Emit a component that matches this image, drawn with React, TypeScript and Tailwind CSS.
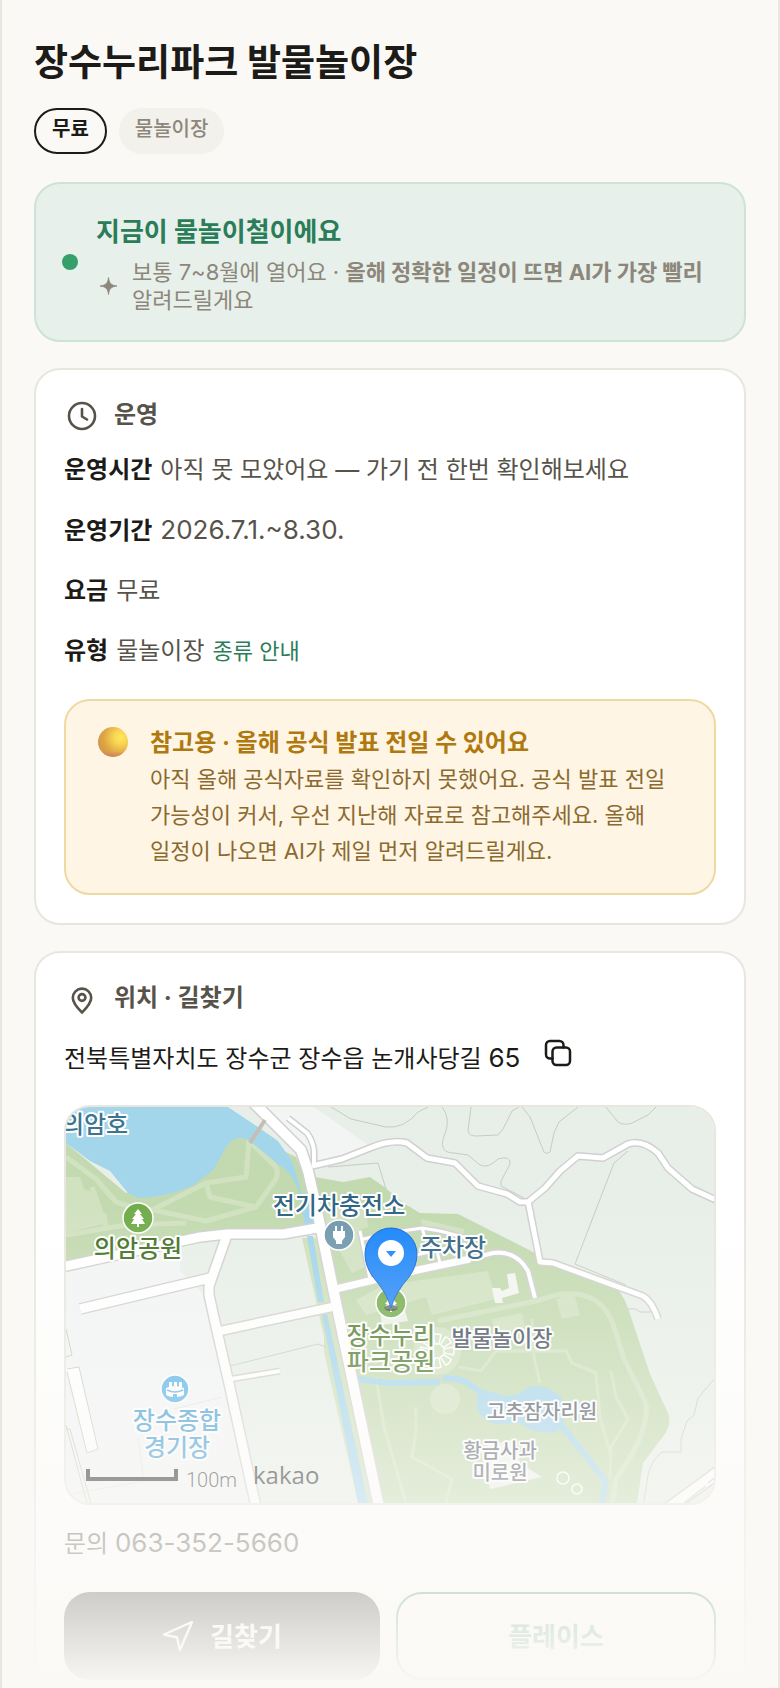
import type { ReactNode } from "react";

const infoRows = [
  { label: "운영시간", value: "아직 못 모았어요 — 가기 전 한번 확인해보세요" },
  { label: "운영기간", value: "2026.7.1.~8.30.", numeric: true },
  { label: "요금", value: "무료" },
  { label: "유형", value: "물놀이장", link: "종류 안내" },
];

function ClockIcon() {
  return (
    <svg viewBox="0 0 36 36" className="size-9" fill="none" stroke="currentColor" strokeWidth="2.6" strokeLinecap="round" strokeLinejoin="round">
      <circle cx="18" cy="18" r="13" />
      <path d="M18 11v7.5l5 3" />
    </svg>
  );
}

function PinIcon() {
  return (
    <svg viewBox="0 0 36 36" className="size-9" fill="none" stroke="currentColor" strokeWidth="2.6" strokeLinejoin="round">
      <path d="M18 31.5C14 27.500 8.800 22.500 8.800 16.800a9.200 9.200 0 0 1 18.400 0C27.200 22.500 22 27.500 18 31.500z" />
      <circle cx="18" cy="16.500" r="3.400" />
    </svg>
  );
}

function CopyIcon() {
  return (
    <svg viewBox="0 0 28 28" className="size-7" fill="none" stroke="currentColor" strokeWidth="2.5" strokeLinejoin="round" strokeLinecap="round">
      <rect x="8.5" y="8.5" width="17.5" height="17.5" rx="4" />
      <path d="M8.500 19.500H6a4 4 0 0 1-4-4V6a4 4 0 0 1 4-4h9.500a4 4 0 0 1 4 4v2.500" />
    </svg>
  );
}

function RouteIcon() {
  return (
    <svg viewBox="0 0 32 32" className="size-8" fill="none" stroke="currentColor" strokeWidth="2.400" strokeLinejoin="round">
      <path d="M30 2 2 14.500l13 3L18 30z" />
    </svg>
  );
}

function SparkIcon() {
  return (
    <svg viewBox="0 0 24 24" className="size-6" fill="currentColor">
      <path d="M12.500 3.500c.7 5.800 2.700 7.800 8.500 8.500-5.800.7-7.800 2.700-8.500 8.500C11.800 14.700 9.800 12.700 4 12c5.800-.7 7.800-2.700 8.500-8.500z" stroke="currentColor" strokeWidth="0.8" />
    </svg>
  );
}

function MoonIcon() {
  return (
    <svg viewBox="0 0 30 30" className="size-[30px]">
      <defs>
        <radialGradient id="moon" cx="0.75" cy="0.35" r="0.75">
          <stop offset="0" stopColor="#ffe860" />
          <stop offset="0.3" stopColor="#f8d552" />
          <stop offset="0.75" stopColor="#dda544" />
          <stop offset="1" stopColor="#d3994c" />
        </radialGradient>
        <linearGradient id="moonShade" x1="0" y1="0" x2="0" y2="1">
          <stop offset="0.82" stopColor="#d0706a" stopOpacity="0" />
          <stop offset="1" stopColor="#d0706a" stopOpacity="0.7" />
        </linearGradient>
      </defs>
      <circle cx="15" cy="15" r="15" fill="url(#moon)" />
      <circle cx="15" cy="15" r="15" fill="url(#moonShade)" />
    </svg>
  );
}

type MapLabelProps = { x: number; y: number; fill: string; size?: number; leading?: number; lines: string[] };

function MapLabel({ x, y, fill, size = 24, leading = 26, lines }: MapLabelProps) {
  return (
    <text y={y} fill={fill} fontSize={size} fontWeight="500" textAnchor="middle" stroke="#ffffff" strokeWidth="4" strokeLinejoin="round" paintOrder="stroke">
      {lines.map((line, i) => (
        <tspan key={line} x={x} dy={i ? leading : 0}>
          {line}
        </tspan>
      ))}
    </text>
  );
}

const roads = [
  { d: "M165 272 214 264", w: 4 },
  { d: "M294 124 304 172M297 132 330 125 356 121 374 124 401 131M356 121 360 134M370 140 374 156M345 149 400 137", w: 3 },
  { d: "M462 94 474 155 487 156 577 189Q586 194 592 212", w: 5 },
  { d: "M222 11 241 26Q247 34 248 44V59", w: 4 },
  { d: "M246 59 276 52 304 41Q325 32 341 36L361 51 389 56 412 79 441 87 454 95H462L479 81 494 64 512 49 537 51 562 37Q576 32 592 46L602 61 626 82 650 93", w: 5 },
  { d: "M400 153 427 146Q450 143 462 164L469 191", w: 4 },
  { d: "M270 182 312 172 347 164 404 152", w: 7 },
  { d: "M154 224 266 200", w: 8 },
  { d: "M144 171 14 202", w: 9 },
  { d: "M161 128 143 179V188L151 224 164 281 190 400", w: 9 },
  { d: "M-4 160 37 151 134 130 161 127H217L251 121", w: 9 },
  { d: "M182-10 235 43 242 64 252 108 268 186 313 400", w: 10 },
];

const contours = [
  "M265 0 285 12 320 20Q338 22 352 5L362 0",
  "M376 0Q384 10 380 24 370 46 388 46L402 48 414 58Q422 62 432 52 445 48 444 57L435 74V79L458 91",
  "M405 0 402 24Q403 29 410 29L432 28 437 22 446 4 453 0",
  "M456 0 464 10 478 45Q481 48 484 45L488 26 493 15 512 0",
  "M540 0 552 15Q558 19 566 16L582 8 590 0",
  "M562 44 548 56 509 157 560 178",
  "M562 202H570L574 205H585",
  "M650 270 632 291 628 308 621 314 615 332V345H596Q585 354 582 368L577 400",
  "M262 60 312 56 320 82",
  "M164 259 252 237 260 240",
];

// angles of the fountain's petals
const petals = [0, 45, 90, 135, 180, 225, 270, 315];

function KakaoMap() {
  return (
    <svg
      viewBox="0 0 648 396"
      preserveAspectRatio="xMidYMid slice"
      role="img"
      aria-label="장수누리파크 발물놀이장 지도"
      className="block h-[396px] w-full font-['Noto_Sans_CJK_KR',sans-serif]"
    >
      <rect width="648" height="396" fill="#e8efe9" />
      <path d="M0 163 115 138 114 164 134 184 143 192 190 396H0z" fill="#f2f5f5" />
      <path d="M200 0 248 0 302 38 250 60z" fill="#f2f5f4" />

      {/* parks */}
      <path d="M0 36 60 86 140 60 160 30 190 30 230 50 262 122 160 126 120 132 0 156z" fill="#c3dab0" />
      <path d="M249 70 277 75 304 70 317 79 339 97 354 106 392 107 469 146 486 156 552 182 558 192 562 201 584 267 602 306Q606 318 598 328L577 356 571 396H312L262 170z" fill="#c3dab0" />
      <path d="M236 131 250 131 312 396H292L258 245 258 230z" fill="#cfe0ba" />

      {/* footpaths inside the parks */}
      <path d="M0 70 14 70 18 82 28 86 32 104 40 106 42 116 0 126zM290 193 318 178 422 164 430 192 366 208 360 190 300 208zM490 192 508 186 514 208 496 212zM426 212 456 206 460 226 430 232z" fill="#d1e2c1" />
      <path d="M252 106 300 96 302 120 296 122 300 160 286 166zM355 112 398 122 398 130 356 120z" fill="#d1e2c1" />
      <g fill="none" stroke="#d1e2c1" strokeWidth="5" strokeLinejoin="round">
        <path d="M0 50 30 72 50 95 82 105 140 76 180 70 183 34 206 56Q214 62 210 72L190 100 140 114 82 102M140 76 144 90 190 100M0 128 60 118 120 116M26 80 40 120" />
        <path d="M372 214 470 194 490 188Q535 180 548 220L558 252 580 296Q584 325 550 372L546 396" />
        <path d="M466 212 468 250 474 276M430 244 500 244 506 256 530 266 534 310 545 350M545 264 550 290 562 312 545 340 544 372M430 244 415 264 392 260M350 300 350 325 346 350 386 372 380 396M310 270 318 320 340 396" strokeWidth="3" />
      </g>
      <circle cx="379" cy="292" r="15" fill="#d1e2c1" />
      <circle cx="371" cy="244" r="24" fill="#d1e2c1" />

      {/* water */}
      <path d="M0 0H162L192 20 212 34 226 54 236 87 251 118H239L232 82Q226 66 212 57L186 36Q172 24 160 40L148 62 128 78Q104 90 72 91L62 86 44 64 24 54 0 36z" fill="#a3d5eb" />
      <path d="M241 129H247L258 195H252zM256 208 261 207 302 396H292L262 240z" fill="#a3d5eb" />
      <path d="M291 272 324 276 374 275M377 271 391 272Q402 274 412 284M495 318 524 354 539 374 536 398" fill="none" stroke="#a3d5eb" strokeWidth="6" />
      <path d="M411 281 439 289 452 287Q460 281 467 279L481 281Q495 288 496 292L498 321 487 326 467 324 454 316 429 317Q415 312 411 302z" fill="#a3d5eb" />

      <path d="M0 262 13 260 32 342 21 346z" fill="#ffffff" />
      <g fill="none" stroke="#c5ccc2" strokeWidth="1">
        {contours.map((d) => (
          <path key={d} d={d} />
        ))}
        <path d="M0 222 6 248 0 250M1 262 13 260 32 342 21 346 1 265M0 318 22 400M4 322 26 400M0 322H4" />
        <path d="M0 388 78 374 72 330M108 302 156 290" stroke="#e2e5e3" />
      </g>

      <g fill="none" stroke="#d0d0d0" strokeLinejoin="round">
        {roads.map((road) => (
          <path key={road.d} d={road.d} strokeWidth={road.w + 3} />
        ))}
        <path d="M602 402 654 364" strokeWidth="14" />
      </g>
      <g fill="none" stroke="#ffffff" strokeLinejoin="round">
        {roads.map((road) => (
          <path key={road.d} d={road.d} strokeWidth={road.w} />
        ))}
        <path d="M602 402 654 364" strokeWidth="11" />
      </g>
      <path d="M618 396 640 379M642 376 650 370" stroke="#d0d0d0" strokeWidth="1.500" />
      <path d="M199 13 184 36" stroke="#c8bdb5" strokeWidth="4" />

      {/* buildings and the round fountain */}
      <path d="M441 167 449 166 453 186 436 191 437 196 429 196 426 181 434 181 436 184 443 181z" fill="#f4f5f1" />
      <path d="M314 204 338 200 342 214 316 218zM414 340 450 332 454 356 476 370 424 382z" fill="#eef2ea" />
      <g fill="none" stroke="#ffffff" strokeWidth="1.500">
        {petals.map((angle) => (
          <path key={angle} d="M369 237 367 228Q371 226 375 228L373 237z" transform={`rotate(${angle} 371 244)`} />
        ))}
        <circle cx="497" cy="371" r="6" />
        <circle cx="511" cy="382" r="5" />
      </g>

      {/* place badges */}
      <g stroke="#ffffff" strokeWidth="1.500">
        <circle cx="72" cy="111" r="15" fill="#72ad4c" />
        <circle cx="273" cy="128" r="15" fill="#7299ae" />
        <circle cx="325" cy="196" r="15" fill="#72ad4c" />
        <circle cx="109" cy="282" r="14" fill="#54b1e8" />
      </g>
      <g fill="#ffffff">
        <path d="M72 102l4 5h-2l4 5h-2l3 5h-6v3h-2v-3h-6l3-5h-2l4-5h-2z" />
        <path d="M325 187l4 5h-2l4 5h-2l3 5h-6v3h-2v-3h-6l3-5h-2l4-5h-2z" />
        <path d="M269 119h2v5h4v-5h2v5h2v6l-3 4v3h-6v-3l-3-4v-6h2z" />
        <path d="M103 275h3v5h-3zM108 275h3v5h-3zM113 275h3v5h-3z" />
        <path d="M100 281q9-4 18 0v7q-3 2-7 2v-3h-4v3q-4 0-7-2z" />
      </g>
      <path d="M101 283q8 4 16 0" fill="none" stroke="#54b1e8" strokeWidth="1.500" />

      <MapLabel x={29} y={26} fill="#3c7590" lines={["의암호"]} />
      <MapLabel x={72} y={150} fill="#437125" lines={["의암공원"]} />
      <MapLabel x={273} y={107} fill="#316684" lines={["전기차충전소"]} />
      <MapLabel x={387} y={149} fill="#316684" lines={["주차장"]} />
      <MapLabel x={325} y={237} fill="#4d7a2c" lines={["장수누리", "파크공원"]} />
      <MapLabel x={436} y={239} fill="#424d5c" size={22} lines={["발물놀이장"]} />
      <MapLabel x={476} y={312} fill="#505a68" size={20} lines={["고추잠자리원"]} />
      <MapLabel x={434} y={351} fill="#5a6270" size={20} leading={22} lines={["황금사과", "미로원"]} />
      <MapLabel x={111} y={322} fill="#3f9bd3" leading={27} lines={["장수종합", "경기장"]} />

      {/* marker */}
      <defs>
        <linearGradient id="marker" x1="0" y1="0" x2="0" y2="1">
          <stop offset="0" stopColor="#1a86fb" />
          <stop offset="1" stopColor="#2a8af8" />
        </linearGradient>
      </defs>
      <ellipse cx="325" cy="201" rx="7" ry="3" fill="#2b3a33" opacity="0.7" />
      <path d="M325 201Q321 186 307 170Q299 159 299 147A26 26 0 0 1 351 147Q351 159 343 170Q329 186 325 201z" fill="url(#marker)" stroke="#1565d0" strokeWidth="1" />
      <circle cx="325" cy="146" r="13" fill="#ffffff" />
      <path d="M320 144h10l-5 6z" fill="#1a86fb" />

      {/* scale bar */}
      <path d="M22 362v10h88v-10" fill="none" stroke="#1f1f1f" strokeWidth="4" />
      <text x="120" y="380" fill="#333333" fontSize="20" fontFamily="Roboto, sans-serif" fontWeight="300">100m</text>
      <text x="187" y="377" fill="#1f1f1f" fontSize="24" fontFamily="Open Sans, sans-serif" fontWeight="500">kakao</text>
    </svg>
  );
}

function CardHeading({ icon, children }: { icon: ReactNode; children: ReactNode }) {
  return (
    <h2 className="flex h-9 items-center gap-[14px] text-[24px] font-bold text-[#57534a]">
      {icon}
      <span className="-mt-[2px]">{children}</span>
    </h2>
  );
}

export default function App() {
  return (
    <main className="relative h-screen overflow-hidden border-x-2 border-[#e8e6df] bg-[#faf9f6] px-8 pt-9 font-[Inter,'Noto_Sans_CJK_KR',sans-serif] break-keep text-[#1c1b18]">
      <h1 className="text-[37px] leading-[54px] font-bold">장수누리파크 발물놀이장</h1>

      <div className="mt-[18px] flex gap-3 text-[20px] leading-[38px]">
        <span className="h-[46px] rounded-full border-2 border-[#1c1b18] px-4 font-bold">무료</span>
        <span className="h-[46px] rounded-full border-2 border-[#f2f1ec] bg-[#f2f1ec] px-[14px] font-medium text-[#8d867b]">물놀이장</span>
      </div>

      <section className="mt-7 flex items-center gap-[18px] rounded-[26px] border-2 border-[#cde3d7] bg-[#e7f0ea] p-[26px]">
        <span className="size-4 shrink-0 rounded-full bg-[#35a069]" />
        <div>
          <h2 className="text-[26px] leading-[44px] font-bold text-[#2b7d59]">지금이 물놀이철이에요</h2>
          <div className="mt-1 flex items-center gap-3 text-[22px] leading-7 text-[#8d867b]">
            <SparkIcon />
            <p className="flex-1">
              보통 7~8월에 열어요 · <strong>올해 정확한 일정이 뜨면 AI가 가장 빨리</strong> 알려드릴게요
            </p>
          </div>
        </div>
      </section>

      <section className="mt-[26px] rounded-[26px] border-2 border-[#e8e6df] bg-white p-7">
        <CardHeading icon={<ClockIcon />}>운영</CardHeading>
        <dl className="mt-4 grid gap-5 text-[24px] leading-10">
          {infoRows.map((row) => (
            <div key={row.label} className="flex items-baseline gap-2">
              <dt className="font-bold">{row.label}</dt>
              <dd className="text-[#57534a]">
                {row.numeric ? <span className="text-[26px]">{row.value}</span> : row.value}
                {row.link && (
                  <a href="#types" className="ml-2 text-[22px] text-[#2b7d59]">
                    {row.link}
                  </a>
                )}
              </dd>
            </div>
          ))}
        </dl>

        <div className="mt-7 flex gap-[22px] rounded-[26px] border-2 border-[#efd9a3] bg-[#fff5e4] px-8 py-6">
          <span className="mt-[2px] shrink-0">
            <MoonIcon />
          </span>
          <div>
            <h3 className="text-[24px] leading-9 font-bold text-[#b0790f]">참고용 · 올해 공식 발표 전일 수 있어요</h3>
            <p className="text-[22px] leading-9 text-[#8a6a2f]">
              아직 올해 공식자료를 확인하지 못했어요. 공식 발표 전일 가능성이 커서, 우선 지난해 자료로 참고해주세요. 올해 일정이 나오면 AI가 제일 먼저 알려드릴게요.
            </p>
          </div>
        </div>
      </section>

      <section className="mt-[26px] rounded-[26px] border-2 border-[#e8e6df] bg-white p-7">
        <CardHeading icon={<PinIcon />}>위치 · 길찾기</CardHeading>
        <div className="mt-5 flex h-10 items-center gap-6 text-[24px]">
          <p>
            전북특별자치도 장수군 장수읍 논개사당길 <span className="text-[26px]">65</span>
          </p>
          <button type="button" aria-label="주소 복사" className="-mt-2">
            <CopyIcon />
          </button>
        </div>

        <div className="mt-7 overflow-hidden rounded-[26px] border-2 border-[#e8e6df]">
          <KakaoMap />
        </div>

        <p className="mt-[18px] text-[24px] leading-10 text-[#57534a]">
          문의 <a href="tel:063-352-5660" className="text-[26px]">063-352-5660</a>
        </p>

        <div className="mt-7 flex gap-4 text-[26px] font-bold">
          <a href="#route" className="flex h-[88px] flex-1 items-center justify-center gap-4 rounded-[26px] bg-[#1c1b18] text-white">
            <RouteIcon />
            길찾기
          </a>
          <a href="#place" className="flex h-[88px] flex-1 items-center justify-center rounded-[26px] border-2 border-[#2b7d59] text-[#2b7d59]">
            플레이스
          </a>
        </div>
      </section>

      <div className="pointer-events-none absolute inset-x-0 bottom-0 h-[480px] bg-linear-to-b from-[#faf9f6]/0 to-[#faf9f6]" />
    </main>
  );
}
